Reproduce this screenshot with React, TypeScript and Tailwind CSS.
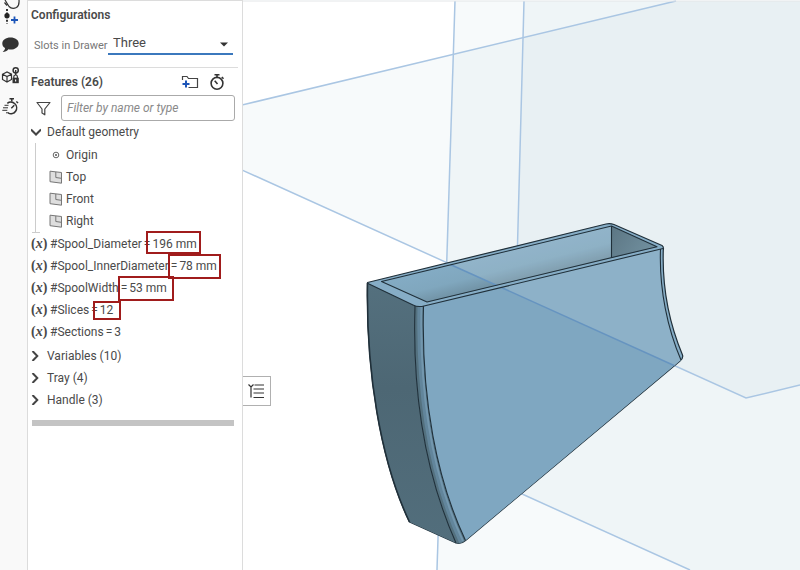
import React, { useState } from 'react';

const planes = ['Top', 'Front', 'Right'];

const variables = [
  { name: '#Spool_Diameter', value: '196 mm', mark: '-top-[2px] left-[118px] h-[23px] w-[55px]' },
  { name: '#Spool_InnerDiameter', value: '78 mm', mark: '-top-px left-[140px] h-[25px] w-[53px]' },
  { name: '#SpoolWidth', value: '53 mm', mark: '-top-px left-[90px] h-[25px] w-[56px]' },
  { name: '#Slices', value: '12', mark: 'top-[2px] left-[65px] h-[19px] w-[28px]' },
  { name: '#Sections', value: '3', mark: '' },
];

const folders = [
  { name: 'Variables', count: 10 },
  { name: 'Tray', count: 4 },
  { name: 'Handle', count: 3 },
];

function ProbeIcon() {
  return (
    <svg width="27" height="26" viewBox="0 0 27 26" fill="none">
      <path d="M4.500 2.500 7 5.500M5 0 9 6.500Q12 9.500 16.500 7.500 19.500 5.500 19 0" stroke="#333" strokeWidth="1.200" />
      <path d="M7 9v15" stroke="#222" strokeWidth="1.800" strokeDasharray="2 1.600" />
      <circle cx="7" cy="15.700" r="2.600" fill="#222" />
      <path d="M14.500 16.500v7M11 20h7" stroke="#1c55b8" strokeWidth="1.800" />
    </svg>
  );
}

function CommentIcon() {
  return (
    <svg width="27" height="18" viewBox="0 0 27 18">
      <path d="M10.500 1.500C5.800 1.500 2.300 4 2.300 7.400c0 2 1 3.600 2.800 4.700-.3 1.700-1.100 2.800-2.400 3.900 2.400-.1 4.300-1 5.700-2.700.7.1 1.400.2 2.100.2 4.700 0 8.200-2.600 8.200-6.100s-3.500-5.900-8.200-5.900z" fill="#333" />
    </svg>
  );
}

function CubeLockIcon() {
  return (
    <svg width="27" height="20" viewBox="0 0 27 20" fill="none" stroke="#333" strokeWidth="1.200">
      <path d="M2.500 8.200 7 6l4.500 2.200v5.300L7 16l-4.500-2.500zM2.500 8.200 7 10.500l4.500-2.300M7 10.500V16" />
      <circle cx="15.700" cy="4.300" r="2.600" strokeWidth="1.500" />
      <path d="M15.700 4v5" strokeWidth="1.400" />
      <path d="M13.800 12.500v-1.800c0-2.300 3.600-2.300 3.600 0v1.800" />
      <rect x="12.500" y="11.700" width="6.300" height="5.500" fill="#333" stroke="none" />
      <path d="M15.600 13.500v2" stroke="#eee" />
    </svg>
  );
}

function FastTimerIcon() {
  return (
    <svg width="27" height="20" viewBox="0 0 27 20" fill="none" stroke="#333" strokeWidth="1.500">
      <path d="M7.300 6.300a5.800 5.800 0 1 1 1 9.800" />
      <path d="M9.500 1.800h4.500M11.800 2v2.500M16.300 4.500l1.800 1.500M11.300 11.200l3-3" />
      <path d="M4.500 8.300h4M3 10.800h5M2.300 13.300h5M6 15.800h3" strokeWidth="1" />
    </svg>
  );
}

function StopwatchIcon() {
  return (
    <svg width="16" height="18" viewBox="0 0 16 18" fill="none" stroke="#333" strokeWidth="1.600">
      <circle cx="8" cy="10.300" r="5.900" />
      <path d="M5.500 1.800h5M8 2v2.500M12.800 4l1.700 1.700M5.700 7.800 8.500 11" />
    </svg>
  );
}

function FolderPlusIcon() {
  return (
    <svg width="18" height="16" viewBox="0 0 18 16" fill="none">
      <path d="M1.500 6V2.500h4.500l1.500 2h9v9H7.500" stroke="#444" strokeWidth="1.200" />
      <path d="M5 6.500v7M1.500 10h7" stroke="#1c55b8" strokeWidth="2" />
    </svg>
  );
}

function FilterIcon() {
  return (
    <svg width="15" height="15" viewBox="0 0 15 15" fill="none" stroke="#444" strokeWidth="1.200">
      <path d="M1 1.500h13L8.800 8v5.800L6 12V8z" strokeLinejoin="round" />
    </svg>
  );
}

function PlaneIcon() {
  return (
    <svg width="14" height="14" viewBox="0 0 14 14" fill="#dedede" stroke="#777" strokeWidth="1">
      <path d="M1 1.200 12.500 2.500v10.700L1 11.700z" />
      <path d="M6.800 2v5.500l5.500.8" fill="none" />
    </svg>
  );
}

function Chevron({ open }: { open?: boolean }) {
  return (
    <svg width="10" height="10" viewBox="0 0 10 10" fill="none" stroke="#444" strokeWidth="2">
      {open ? <path d="M0 2.500 5 7.500l5-5" /> : <path d="M1.500 0 6.300 5l-4.800 5" />}
    </svg>
  );
}

// Shaded drawer part with the three default planes around it
function Scene() {
  return (
    <svg className="absolute inset-0 h-full w-full" viewBox="243 0 557 570" preserveAspectRatio="xMinYMin slice" fill="none">
      <defs>
        <linearGradient id="side" x1="0" y1="283" x2="0" y2="543" gradientUnits="userSpaceOnUse">
          <stop offset="0" stopColor="#54707e" />
          <stop offset="0.400" stopColor="#4d6774" />
          <stop offset="1" stopColor="#526e7c" />
        </linearGradient>
        <linearGradient id="inner" x1="490" y1="252" x2="499" y2="288" gradientUnits="userSpaceOnUse">
          <stop offset="0" stopColor="#84acc5" />
          <stop offset="0.550" stopColor="#80a7be" />
          <stop offset="1" stopColor="#6d8d9f" />
        </linearGradient>
        <linearGradient id="innerEnd" x1="612" y1="230" x2="650" y2="255" gradientUnits="userSpaceOnUse">
          <stop offset="0" stopColor="#5d7785" />
          <stop offset="1" stopColor="#71909f" />
        </linearGradient>
        <clipPath id="inFront">
          <path d="M423 306 661 248.500C659 290 668 330 681 360L465.500 540.500C437 480 421 400 423 306z" />
          <path d="M381.500 281.500 611.500 226 611.500 258 427 302z" />
        </clipPath>
      </defs>

      <rect x="243" width="557" height="570" fill="#fff" />
      <g fill="#98b9c6" fillOpacity="0.080">
        <path d="M455 1H800V570H437z" />
        <path d="M524 1H800V570H690L511 489z" />
        <path d="M242 105 676 1H800V385L746 398 242 170z" />
      </g>
      <g stroke="#aac6e3" strokeWidth="1.500">
        <path d="M242 105 676 1" />
        <path d="M242 170 746 398 800 385" />
        <path d="M455 1 437 570" />
        <path d="M524 1 511 489 690 570" />
      </g>
      <path d="M28 1H800" stroke="#e3e6e8" />

      {/* whole silhouette, rim colour */}
      <path
        d="M367.500 282.500 606 224Q610 223 614 224.500L662 245.500Q664 247 663.300 250C662 290 670 325 682.500 355Q683.500 358.500 680 361L465.500 540.500Q461 544.500 456 543L409.500 522C380 460 366 370 367.500 282.500z"
        fill="#86adc6"
        stroke="#20303a"
        strokeWidth="1.200"
        strokeLinejoin="round"
      />
      <path d="M367.500 283 415 306C412 400 428 480 456 543L409.500 522C380 460 366 370 367.500 283z" fill="url(#side)" />
      <path d="M415 306H423.500C421 400 437 480 465.500 540.500Q461 544.500 456 543C428 480 412 400 415 306z" fill="#54717f" />
      <path d="M420 307C418 400 433 480 461.500 542" stroke="#62859b" strokeWidth="5" />
      <path d="M421.500 307C419.500 400 434.500 480 463 541" stroke="#7397ae" strokeWidth="2" />
      <path d="M423.500 306 660.500 249C659 290 668 330 681 360L465.500 540.500C437 480 421 400 423.500 306z" fill="#7fa7c1" />
      <path d="M381.500 281.500 611.500 226V258L427 302z" fill="url(#inner)" />
      <path d="M611.500 226 657 246.700 611.500 258z" fill="url(#innerEnd)" />
      <g clipPath="url(#inFront)">
        <path d="M447 263 700 200V377z" fill="#dbe5ea" fillOpacity="0.160" />
        <path d="M447 263 746 398" stroke="#6694c0" strokeWidth="1.500" />
      </g>
      <g stroke="#20303a" strokeWidth="1.100" strokeLinejoin="round">
        <path d="M381.500 281.500 611.500 226 657 246.700 427 302z" />
        <path d="M611.500 226V258" />
        <path d="M368 283.500 413 305Q418 307.500 424 306L663 248.500" />
        <path d="M415 306C412 400 428 480 456 543" />
        <path d="M423.500 306C421 400 437 480 465.500 540.500" />
        <path d="M660.500 249C659 290 668 330 681 360" />
        <path d="M367.500 283C366 370 380 460 409.500 522" strokeWidth="1.600" />
      </g>
    </svg>
  );
}

export default function App() {
  const [slots, setSlots] = useState('Three');
  const [filter, setFilter] = useState('');

  return (
    <div className="flex min-h-screen bg-white font-[Roboto,sans-serif] text-xs text-[#4a4a4a]">
      <nav className="flex w-7 shrink-0 flex-col border-r border-[#dcdcdc] bg-[#f9f9f9]">
        <button aria-label="Probe" className="h-[26px]"><ProbeIcon /></button>
        <button aria-label="Comments" className="mt-[10px] h-[18px]"><CommentIcon /></button>
        <button aria-label="Locked part" className="mt-3 h-5"><CubeLockIcon /></button>
        <button aria-label="Performance" className="mt-[11px] h-5"><FastTimerIcon /></button>
      </nav>

      <aside className="w-[215px] shrink-0 border-t border-r border-[#dcdcdc]">
        <section className="mr-1 border-b border-[#dcdcdc] pb-[13px]">
          <h2 className="px-[3px] pt-[5px] leading-[18px] font-semibold">Configurations</h2>
          <div className="mt-[10px] flex h-5 items-center pl-[6px]">
            <label htmlFor="slots" className="w-[74px] shrink-0 pt-1 text-[11px] whitespace-nowrap text-[#777]">Slots in Drawer</label>
            <div className="relative w-[125px]">
              <select
                id="slots"
                value={slots}
                onChange={(e) => setSlots(e.target.value)}
                className="block h-[21px] w-full appearance-none border-b-2 border-[#3b78bd] bg-transparent pb-px pl-[5px] text-[13px] leading-[18px] outline-none"
              >
                <option>Two</option>
                <option>Three</option>
                <option>Four</option>
              </select>
              <svg className="pointer-events-none absolute top-[8px] right-[5px]" width="8" height="5" viewBox="0 0 8 5">
                <path d="M0 .5h8L4 4.500z" fill="#333" />
              </svg>
            </div>
          </div>
        </section>

        <div className="flex h-[27px] items-center pr-[17px] pl-[3px]">
          <h2 className="grow font-semibold">Features (26)</h2>
          <button aria-label="Add folder" className="mr-[10px]"><FolderPlusIcon /></button>
          <button aria-label="Regeneration times"><StopwatchIcon /></button>
        </div>
        <div className="flex items-center pr-[7px] pl-2">
          <button aria-label="Filter" className="mr-[10px]"><FilterIcon /></button>
          <input
            type="text"
            aria-label="Filter features"
            value={filter}
            onChange={(e) => setFilter(e.target.value)}
            placeholder="Filter by name or type"
            className="h-[26px] w-full min-w-0 rounded-[3px] border border-[#aaa] px-[5px] italic outline-none placeholder:text-[#8a8a8a]"
          />
        </div>

        <button className="flex h-[22px] w-full items-center gap-[6px] pl-[3px]">
          <Chevron open />
          Default geometry
        </button>
        <div className="relative py-px pl-[21px]">
          <span className="absolute top-0 bottom-0 left-[7px] w-px bg-[#ccc]" />
          <span className="absolute bottom-0 left-[4px] h-px w-[8px] bg-[#ccc]" />
          <div className="flex h-[22px] items-center gap-[3px]">
            <svg width="14" height="14" viewBox="0 0 14 14" fill="none" stroke="#666">
              <circle cx="7" cy="7" r="2.800" />
              <circle cx="7" cy="7" r="1" fill="#555" stroke="none" />
            </svg>
            Origin
          </div>
          {planes.map((plane) => (
            <div key={plane} className="flex h-[22px] items-center gap-[3px]">
              <PlaneIcon />
              {plane}
            </div>
          ))}
        </div>

        <ul className="pb-[2px]">
          {variables.map((v) => (
            <li key={v.name} className="relative flex h-[22px] items-center pl-[3px] whitespace-nowrap">
              <span className="w-[19px] shrink-0 font-['Liberation_Serif',serif] text-[14px] font-bold">
                (<i>x</i>)
              </span>
              <span className="flex gap-[2px]">
                <span>{v.name}</span>
                <span>=</span>
                <span>{v.value}</span>
              </span>
              {v.mark && <span className={`absolute border-2 border-[#a01c1c] ${v.mark}`} />}
            </li>
          ))}
        </ul>

        {folders.map((f) => (
          <button key={f.name} className="flex h-[22px] w-full items-center gap-[6px] pl-[3px]">
            <Chevron />
            {f.name} ({f.count})
          </button>
        ))}
        <div className="mt-[9px] mr-2 ml-1 h-[6px] bg-[#c4c4c4]" />
      </aside>

      <main className="relative min-w-0 grow overflow-hidden">
        <Scene />
        <button aria-label="Show feature list" className="absolute top-[376px] left-0 flex h-[30px] w-7 items-center justify-center border border-l-0 border-[#b0b0b0] bg-white">
          <svg width="17" height="16" viewBox="0 0 17 16" fill="none" stroke="#333" strokeWidth="1.200">
            <path d="M.5 1.500 3 4l2.500-2.500M6.500 2H16M3 4v10.500M5.500 6H16M5.500 10H16M5.500 14.500H16" />
          </svg>
        </button>
      </main>
    </div>
  );
}
